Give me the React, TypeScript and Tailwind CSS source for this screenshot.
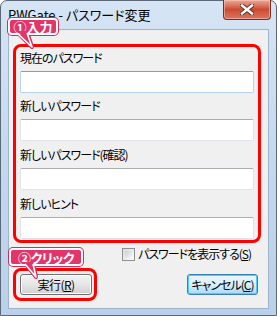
import React from 'react'

const font = "[font-family:'Noto_Sans_CJK_JP','Noto_Sans',sans-serif] [font-feature-settings:'palt']"

const Field: React.FC<{ label: string; focused?: boolean; className?: string }> = ({ label, focused, className }) => (
  <div className={className}>
    <div className="pl-[4px] text-[12px] leading-[16px] tracking-[-1px] text-black">{label}</div>
    <div
      className={
        focused
          ? 'ml-[4px] mt-[5px] h-[22px] w-[234px] rounded-[2px] border border-[#b5d3ee] border-t-[#6ea3d2] bg-white'
          : 'ml-[4px] mt-[5px] h-[22px] w-[234px] rounded-[2px] border border-[#e2e3ea] border-t-[#abadb3] bg-white'
      }
    />
  </div>
)

export default function App() {
  return (
    <div className={`relative h-[316px] w-[277px] overflow-hidden bg-white ${font}`}>
      {/* window frame */}
      <div className="flex h-full w-full flex-col rounded-t-[7px] border border-[#5c6777] bg-gradient-to-b from-[#d6e5f5] via-[#c4d8ee] to-[#b9d1ea]">
        {/* title bar */}
        <div className="flex h-[28px] shrink-0 items-start">
          <div className="whitespace-nowrap pl-[7px] pt-[5px] text-[13px] leading-[18px] text-black">PWGate - パスワード変更</div>
          <div className="relative ml-auto mr-[5px] -mt-px flex h-[20px] w-[48px] items-center justify-center rounded-b-[4px] border border-t-0 border-[#7a2c1f] bg-gradient-to-b from-[#e9a99b] via-[#cc4a30] to-[#d9775e] shadow-[inset_0_0_0_1px_rgba(255,210,200,0.5)]">
            <svg width="14" height="11" viewBox="0 0 14 11">
              <path d="M2 1.5 L12 9.5 M12 1.5 L2 9.5" stroke="#5a2a22" strokeWidth="4.2" strokeLinecap="square" />
              <path d="M2 1.5 L12 9.5 M12 1.5 L2 9.5" stroke="#ffffff" strokeWidth="2.4" strokeLinecap="square" />
            </svg>
          </div>
        </div>

        {/* client area */}
        <div className="mx-[7px] mb-[6px] flex flex-1 flex-col border border-[#9fb3ca] bg-[#f0f0f0]">
          {/* annotated group of fields */}
          <div className="ml-[4px] mt-[14px] w-[248px] rounded-[8px] border-[3px] border-[#ff0000] pb-[1px] pt-[3px]">
            <Field label="現在のパスワード" focused />
            <Field label="新しいパスワード" className="mt-[5px]" />
            <Field label="新しいパスワード(確認)" className="mt-[6px]" />
            <Field label="新しいヒント" className="mt-[6px]" />
          </div>

          {/* show password */}
          <div className="mt-[3px] flex h-[16px] items-center pl-[113px]">
            <div className="h-[13px] w-[13px] border border-[#8e8f8f] bg-gradient-to-br from-[#dcdcdc] to-[#fbfbfb] p-[2px]">
              <div className="h-full w-full bg-gradient-to-br from-[#cbcfd5] to-[#f6f6f6]" />
            </div>
            <span className="ml-[3px] whitespace-nowrap text-[12px] leading-[16px] tracking-[-1px] text-black">
              パスワードを表示する(<span className="underline">S</span>)
            </span>
          </div>

          {/* buttons */}
          <div className="mt-[6px] flex items-start">
            <div className="ml-[4px] rounded-[8px] border-[3px] border-[#ff0000] pb-[3px] pl-[4px] pr-[2px] pt-[3px]">
              <div className="flex h-[21px] w-[72px] items-center justify-center rounded-[3px] border border-[#707070] bg-gradient-to-b from-[#f2f2f2] via-[#e6e6e6] to-[#cfcfcf] text-[12px] text-black shadow-[inset_0_0_0_1px_#fcfcfc]">
                <span className="whitespace-nowrap tracking-[-0.5px]">実行(<span className="underline">R</span>)</span>
              </div>
            </div>
            <div className="ml-auto mr-[10px] mt-[6px] flex h-[21px] w-[71px] items-center justify-center rounded-[3px] border border-[#3c7fb1] bg-gradient-to-b from-[#eaf6fd] via-[#d9f0fc] to-[#a7d9f5] text-[12px] text-black shadow-[inset_0_0_0_1px_#48d0fb]">
              <span className="whitespace-nowrap tracking-[-1px]">キャンセル(<span className="underline">C</span>)</span>
            </div>
          </div>
        </div>
      </div>

      {/* callout tails, outer edge */}
      <svg className="pointer-events-none absolute inset-0" width="277" height="316">
        <path d="M17 32 L32 47 L27 32" fill="none" stroke="#d42d60" strokeWidth="4" strokeLinejoin="round" />
        <path d="M24 262 L36 277 L33 262" fill="none" stroke="#d42d60" strokeWidth="4" strokeLinejoin="round" />
      </svg>

      {/* callouts */}
      <div className="absolute left-[8px] top-[18px] flex h-[17px] w-[50px] items-center justify-center rounded-[4px] border-2 border-white bg-[#e2356a] text-[13px] font-bold leading-none text-white shadow-[0_0_0_1px_#d42d60]">
        <span className="whitespace-nowrap">①入力</span>
      </div>
      <div className="absolute left-[9px] top-[248px] flex h-[18px] w-[74px] items-center justify-center rounded-[4px] border-2 border-white bg-[#e2356a] text-[13px] font-bold leading-none text-white shadow-[0_0_0_1px_#d42d60]">
        <span className="whitespace-nowrap tracking-[-0.5px]">②クリック</span>
      </div>

      {/* callout tails, fill */}
      <svg className="pointer-events-none absolute inset-0" width="277" height="316">
        <polygon points="17,31 27,31 32,47" fill="#e2356a" />
        <path d="M17 33 L32 47 L27 33" fill="none" stroke="#ffffff" strokeWidth="1.6" strokeLinejoin="round" />
        <polygon points="24,262 33,262 36,277" fill="#e2356a" />
        <path d="M25 264 L36 277 L33 264" fill="none" stroke="#ffffff" strokeWidth="1.6" strokeLinejoin="round" />
      </svg>
    </div>
  )
}
